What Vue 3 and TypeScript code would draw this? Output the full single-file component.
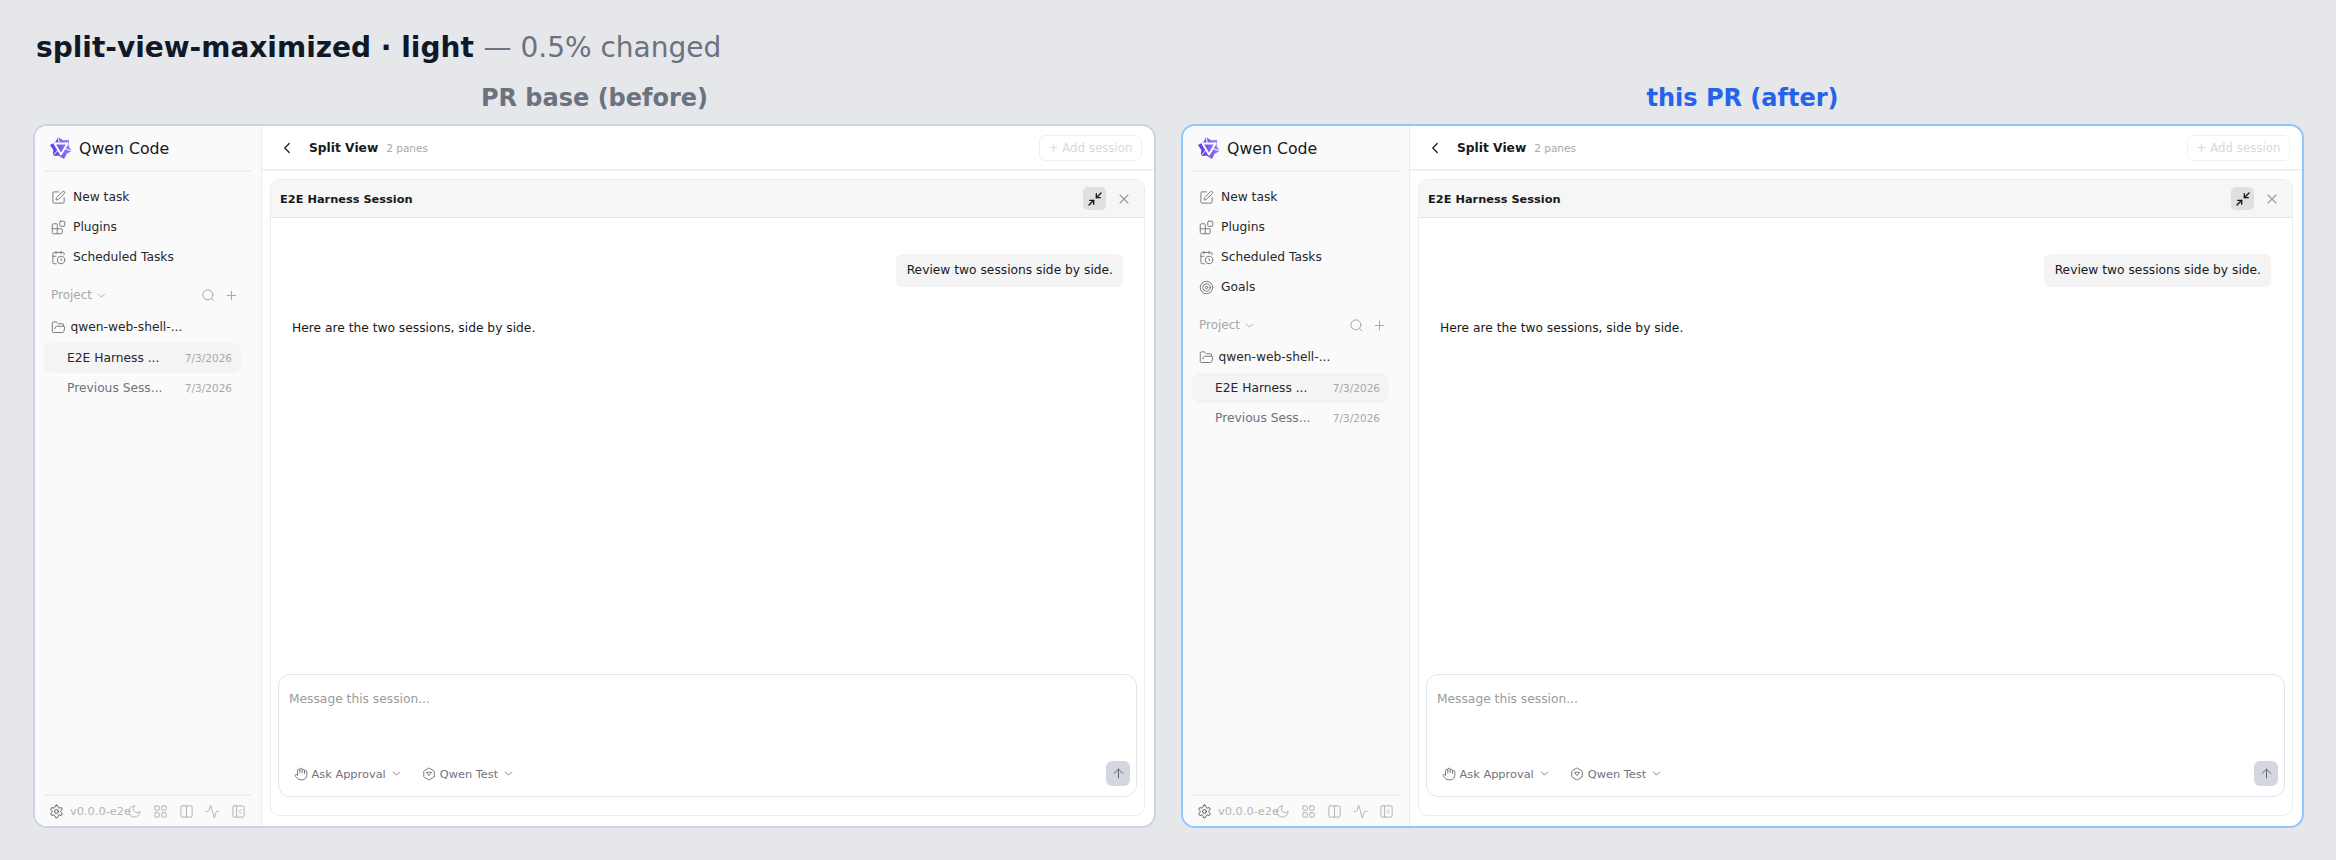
<script setup lang="ts">
interface Pane {
  label: string
  after: boolean
  nav: { icon: string; text: string }[]
}

const icons: Record<string, string> = {
  pen: '<path d="M12 3H5a2 2 0 0 0-2 2v14a2 2 0 0 0 2 2h14a2 2 0 0 0 2-2v-7"/><path d="M18.375 2.625a1 1 0 0 1 3 3l-9.013 9.014a2 2 0 0 1-.853.505l-2.873.84a.5.5 0 0 1-.62-.62l.84-2.873a2 2 0 0 1 .506-.852z"/>',
  blocks: '<path d="M10 22V7a1 1 0 0 0-1-1H4a2 2 0 0 0-2 2v12a2 2 0 0 0 2 2h12a2 2 0 0 0 2-2v-5a1 1 0 0 0-1-1H2"/><rect x="14" y="2" width="8" height="8" rx="1"/>',
  calendar: '<path d="M16 14v2.2l1.6 1"/><path d="M16 2v4"/><path d="M21 7.5V6a2 2 0 0 0-2-2H5a2 2 0 0 0-2 2v14a2 2 0 0 0 2 2h3.5"/><path d="M3 10h5"/><path d="M8 2v4"/><circle cx="16" cy="16" r="6"/>',
  target: '<circle cx="12" cy="12" r="10"/><circle cx="12" cy="12" r="6"/><circle cx="12" cy="12" r="2"/>',
  search: '<path d="m21 21-4.34-4.34"/><circle cx="11" cy="11" r="8"/>',
  plus: '<path d="M5 12h14"/><path d="M12 5v14"/>',
  chevron: '<path d="m6 9 6 6 6-6"/>',
  back: '<path d="m15 18-6-6 6-6"/>',
  folder: '<path d="m6 14 1.5-2.9A2 2 0 0 1 9.24 10H20a2 2 0 0 1 1.94 2.5l-1.54 6a2 2 0 0 1-1.95 1.5H4a2 2 0 0 1-2-2V5a2 2 0 0 1 2-2h3.9a2 2 0 0 1 1.69.9l.81 1.2a2 2 0 0 0 1.67.9H18a2 2 0 0 1 2 2v2"/>',
  gear: '<path d="M12.22 2h-.44a2 2 0 0 0-2 2v.18a2 2 0 0 1-1 1.73l-.43.25a2 2 0 0 1-2 0l-.15-.08a2 2 0 0 0-2.73.73l-.22.38a2 2 0 0 0 .73 2.73l.15.1a2 2 0 0 1 1 1.72v.51a2 2 0 0 1-1 1.74l-.15.09a2 2 0 0 0-.73 2.73l.22.38a2 2 0 0 0 2.73.73l.15-.08a2 2 0 0 1 2 0l.43.25a2 2 0 0 1 1 1.73V20a2 2 0 0 0 2 2h.44a2 2 0 0 0 2-2v-.18a2 2 0 0 1 1-1.73l.43-.25a2 2 0 0 1 2 0l.15.08a2 2 0 0 0 2.73-.73l.22-.39a2 2 0 0 0-.73-2.73l-.15-.08a2 2 0 0 1-1-1.74v-.5a2 2 0 0 1 1-1.74l.15-.09a2 2 0 0 0 .73-2.73l-.22-.38a2 2 0 0 0-2.73-.73l-.15.08a2 2 0 0 1-2 0l-.43-.25a2 2 0 0 1-1-1.73V4a2 2 0 0 0-2-2z"/><circle cx="12" cy="12" r="3"/>',
  moon: '<path d="M12 3a6 6 0 0 0 9 9 9 9 0 1 1-9-9Z"/>',
  grid: '<rect x="3" y="3" width="7" height="7" rx="1"/><rect x="14" y="3" width="7" height="7" rx="1"/><rect x="14" y="14" width="7" height="7" rx="1"/><rect x="3" y="14" width="7" height="7" rx="1"/>',
  columns: '<rect x="3" y="3" width="18" height="18" rx="2"/><path d="M12 3v18"/>',
  activity: '<path d="M22 12h-2.48a2 2 0 0 0-1.93 1.46l-2.35 8.36a.25.25 0 0 1-.48 0L9.24 2.18a.25.25 0 0 0-.48 0l-2.35 8.36A2 2 0 0 1 4.49 12H2"/>',
  panel: '<rect x="3" y="3" width="18" height="18" rx="2"/><path d="M9 3v18"/><path d="m16 15-3-3 3-3"/>',
  minimize: '<path d="m14 10 7-7"/><path d="M20 10h-6V4"/><path d="m3 21 7-7"/><path d="M4 14h6v6"/>',
  close: '<path d="M18 6 6 18"/><path d="m6 6 12 12"/>',
  hand: '<path d="M18 11V6a2 2 0 0 0-2-2a2 2 0 0 0-2 2"/><path d="M14 10V4a2 2 0 0 0-2-2a2 2 0 0 0-2 2v2"/><path d="M10 10.5V6a2 2 0 0 0-2-2a2 2 0 0 0-2 2v8"/><path d="M18 8a2 2 0 1 1 4 0v6a8 8 0 0 1-8 8h-2c-2.8 0-4.5-.86-5.99-2.34l-3.6-3.6a2 2 0 0 1 2.83-2.82L7 15"/>',
  model: '<path d="M21 16V8a2 2 0 0 0-1-1.73l-7-4a2 2 0 0 0-2 0l-7 4A2 2 0 0 0 3 8v8a2 2 0 0 0 1 1.73l7 4a2 2 0 0 0 2 0l7-4A2 2 0 0 0 21 16z"/><path d="m8 9.5 4 5.5 4-5.5z"/>',
  up: '<path d="m5 12 7-7 7 7"/><path d="M12 19V5"/>',
}

const baseNav = [
  { icon: 'pen', text: 'New task' },
  { icon: 'blocks', text: 'Plugins' },
  { icon: 'calendar', text: 'Scheduled Tasks' },
]

const panes: Pane[] = [
  { label: 'PR base (before)', after: false, nav: baseNav },
  { label: 'this PR (after)', after: true, nav: [...baseNav, { icon: 'target', text: 'Goals' }] },
]

const footerIcons = ['moon', 'grid', 'columns', 'activity', 'panel']
</script>

<template>
  <div class="page">
    <h1 class="title">split-view-maximized · light <span class="delta">— 0.5% changed</span></h1>
    <div class="compare">
      <section v-for="pane in panes" :key="pane.label" class="column">
        <h2 class="label" :class="{ 'label-after': pane.after }">{{ pane.label }}</h2>
        <div class="frame" :class="{ 'frame-after': pane.after }">
          <aside class="sidebar">
            <div class="brand">
              <svg class="logo" viewBox="0 0 24 24">
                <defs>
                  <linearGradient :id="`logo-${pane.after}`" x1="0" y1="0.6" x2="1" y2="0.3">
                    <stop offset="0" stop-color="#5534e6" />
                    <stop offset="1" stop-color="#a78bfa" />
                  </linearGradient>
                </defs>
                <path
                  d="M9 1 14.1 4.3 20.1 3.9 19.7 9.9 23 15 17.7 17.7 15 23 9.9 19.7 3.9 20.1 4.3 14.1 1 9 6.3 6.3Z"
                  :fill="`url(#logo-${pane.after})`"
                  stroke-linejoin="round"
                />
                <path d="M5.5 7.5H18.5L12 18.5Z" fill="none" stroke="#fafafa" stroke-width="2" stroke-linejoin="round" />
                <path d="M9 1 10.5 7.5M23 15 15.5 12.5M3.9 20.1 9 14" fill="none" stroke="#fafafa" stroke-width="1" />
              </svg>
              <span>Qwen Code</span>
            </div>
            <nav class="nav">
              <a v-for="item in pane.nav" :key="item.text" class="nav-item">
                <svg class="icon nav-icon" viewBox="0 0 24 24" v-html="icons[item.icon]" />
                {{ item.text }}
              </a>
            </nav>
            <div class="section-head">
              <span class="section-name">Project
                <svg class="icon tiny" viewBox="0 0 24 24" v-html="icons.chevron" />
              </span>
              <span class="section-actions">
                <svg class="icon small" viewBox="0 0 24 24" v-html="icons.search" />
                <svg class="icon small" viewBox="0 0 24 24" v-html="icons.plus" />
              </span>
            </div>
            <div class="folder">
              <svg class="icon nav-icon" viewBox="0 0 24 24" v-html="icons.folder" />
              <span>qwen-web-shell-...</span>
            </div>
            <div class="session session-active">
              <span class="session-name">E2E Harness ...</span>
              <span class="session-date">7/3/2026</span>
            </div>
            <div class="session">
              <span class="session-name session-muted">Previous Sess...</span>
              <span class="session-date">7/3/2026</span>
            </div>
            <footer class="side-footer">
              <svg class="icon gear" viewBox="0 0 24 24" v-html="icons.gear" />
              <span class="version">v0.0.0-e2e</span>
              <span class="footer-icons">
                <svg v-for="name in footerIcons" :key="name" class="icon footer-icon" viewBox="0 0 24 24" v-html="icons[name]" />
              </span>
            </footer>
          </aside>

          <main class="main">
            <header class="topbar">
              <svg class="icon back" viewBox="0 0 24 24" v-html="icons.back" />
              <strong class="topbar-title">Split View</strong>
              <span class="topbar-count">2 panes</span>
              <button class="add-btn">+ Add session</button>
            </header>
            <div class="panel">
              <div class="panel-head">
                <span class="panel-title">E2E Harness Session</span>
                <span class="max-btn">
                  <svg class="icon max-icon" viewBox="0 0 24 24" v-html="icons.minimize" />
                </span>
                <svg class="icon close" viewBox="0 0 24 24" v-html="icons.close" />
              </div>
              <div class="messages">
                <div class="bubble">Review two sessions side by side.</div>
                <p class="reply">Here are the two sessions, side by side.</p>
              </div>
              <div class="composer">
                <div class="placeholder">Message this session...</div>
                <div class="composer-bar">
                  <span class="chip">
                    <svg class="icon chip-icon" viewBox="0 0 24 24" v-html="icons.hand" />
                    Ask Approval
                    <svg class="icon tiny" viewBox="0 0 24 24" v-html="icons.chevron" />
                  </span>
                  <span class="chip">
                    <svg class="icon chip-icon" viewBox="0 0 24 24" v-html="icons.model" />
                    Qwen Test
                    <svg class="icon tiny" viewBox="0 0 24 24" v-html="icons.chevron" />
                  </span>
                  <span class="send">
                    <svg class="icon small" viewBox="0 0 24 24" v-html="icons.up" />
                  </span>
                </div>
              </div>
            </div>
          </main>
        </div>
      </section>
    </div>
  </div>
</template>

<style>
html, body {
  margin: 0;
  background: #e5e7eb;
}
</style>

<style scoped>
* {
  box-sizing: border-box;
}

.page {
  width: 2336px;
  height: 860px;
  padding: 28px 33px 0;
  overflow: hidden;
  font-family: 'DejaVu Sans', sans-serif;
  background: #e5e7eb;
}

.title {
  margin: 0;
  padding-left: 3px;
  font-size: 28px;
  line-height: 40px;
  font-weight: 700;
  color: #111827;
}

.delta {
  font-weight: 400;
  color: #6b7280;
}

.compare {
  display: grid;
  grid-template-columns: 1123px 1123px;
  column-gap: 25px;
  margin-top: 14px;
}

.label {
  margin: 0 0 10px;
  text-align: center;
  font-size: 24px;
  line-height: 32px;
  font-weight: 700;
  color: #6b7280;
}

.label-after {
  color: #2563eb;
}

.frame {
  display: flex;
  height: 704px;
  background: #fff;
  border: 2px solid #cbd5e1;
  border-radius: 14px;
  overflow: hidden;
}

.frame-after {
  border-color: #93c5fd;
}

.icon {
  flex: none;
  fill: none;
  stroke: currentColor;
  stroke-width: 1.6;
  stroke-linecap: round;
  stroke-linejoin: round;
}

.tiny {
  width: 13px;
  height: 13px;
}

.small {
  width: 15px;
  height: 15px;
}

/* sidebar */
.sidebar {
  display: flex;
  flex-direction: column;
  flex: none;
  width: 227px;
  padding: 0 10px 0 9px;
  background: #fafafa;
  border-right: 1px solid #ececec;
}

.brand {
  display: flex;
  align-items: center;
  gap: 6px;
  height: 46px;
  padding-left: 5px;
  font-size: 15.75px;
  color: #18181b;
  border-bottom: 2px solid #f0f0f0;
}

.logo {
  width: 24px;
  height: 24px;
}

.nav {
  display: flex;
  flex-direction: column;
  margin-top: 10px;
}

.nav-item {
  display: flex;
  align-items: center;
  gap: 7px;
  height: 30px;
  padding-left: 7px;
  font-size: 12.25px;
  color: #27272a;
}

.nav-icon {
  width: 15px;
  height: 15px;
  color: #7c7c85;
}

.section-head {
  display: flex;
  align-items: center;
  justify-content: space-between;
  height: 24px;
  margin-top: 11px;
  padding: 0 12.5px 0 7px;
  font-size: 12px;
  color: #a8a8a8;
}

.section-name {
  display: flex;
  align-items: center;
  gap: 3px;
}

.section-actions {
  display: flex;
  gap: 8px;
}

.folder {
  display: flex;
  align-items: center;
  gap: 4.5px;
  height: 30px;
  margin: 5px 0 1px;
  padding-left: 7px;
  font-size: 12.25px;
  color: #27272a;
}

.session {
  display: flex;
  align-items: center;
  justify-content: space-between;
  width: 197px;
  height: 30px;
  padding: 0 9px 0 23px;
  border-radius: 8px;
  font-size: 12.25px;
  color: #27272a;
}

.session-active {
  background: #f4f4f5;
}

.session-muted {
  color: #71717a;
}

.session-date {
  font-size: 10.5px;
  color: #a8a8a8;
}

.side-footer {
  display: flex;
  align-items: center;
  height: 32px;
  margin-top: auto;
  padding-left: 5px;
  border-top: 2px solid #f0f0f0;
  color: #b4b4b4;
}

.gear {
  width: 15px;
  height: 15px;
  color: #52525b;
}

.version {
  margin-left: 6px;
  width: 56.5px;
  font-size: 11.375px;
  white-space: nowrap;
}

.footer-icons {
  display: flex;
  gap: 11px;
}

.footer-icon {
  width: 15px;
  height: 15px;
}

/* main */
.main {
  display: flex;
  flex-direction: column;
  flex: 1;
  min-width: 0;
}

.topbar {
  display: flex;
  align-items: center;
  flex: none;
  height: 45px;
  padding: 0 12px 0 16px;
  border-bottom: 2px solid #f0f0f0;
}

.back {
  width: 18px;
  height: 18px;
  color: #18181b;
}

.topbar-title {
  margin-left: 13px;
  font-size: 12.25px;
  color: #18181b;
}

.topbar-count {
  margin-left: 8px;
  font-size: 10.5px;
  color: #a8a8a8;
}

.add-btn {
  margin-left: auto;
  width: 103px;
  height: 26px;
  padding: 0;
  font: inherit;
  font-size: 11.8px;
  color: #d9d9d9;
  background: #fff;
  border: 1px solid #f0f0f0;
  border-radius: 6px;
}

.panel {
  display: flex;
  flex-direction: column;
  flex: 1;
  margin: 8px 9px 10px 8px;
  border: 1px solid #ececec;
  border-radius: 10px;
  overflow: hidden;
}

.panel-head {
  display: flex;
  align-items: center;
  flex: none;
  height: 38px;
  padding: 0 12px 0 9px;
  background: #f6f6f6;
  border-bottom: 1px solid #e4e4e4;
}

.panel-title {
  font-size: 11.375px;
  font-weight: 700;
  color: #18181b;
}

.max-btn {
  display: flex;
  align-items: center;
  justify-content: center;
  width: 23px;
  height: 23px;
  margin-left: auto;
  color: #18181b;
  background: #e0e0e0;
  border-radius: 5px;
}

.max-icon {
  width: 16px;
  height: 16px;
  stroke-width: 2;
}

.close {
  width: 16px;
  height: 16px;
  margin-left: 10px;
  color: #9a9a9a;
}

.messages {
  flex: 1;
  padding: 36px 21px 0;
}

.bubble {
  width: fit-content;
  margin-left: auto;
  padding: 10px 10px 10px 11px;
  font-size: 12.25px;
  line-height: 13px;
  color: #18181b;
  background: #f4f4f5;
  border-radius: 6px;
}

.reply {
  margin: 32px 0 0;
  font-size: 12.25px;
  line-height: 18px;
  color: #18181b;
}

.composer {
  display: flex;
  flex-direction: column;
  flex: none;
  height: 123px;
  margin: 0 7px 18px;
  border: 1.5px solid #e4e4ec;
  border-radius: 12px;
}

.placeholder {
  margin: 17px 0 0 10px;
  font-size: 12.25px;
  color: #9a9a9a;
}

.composer-bar {
  display: flex;
  align-items: center;
  gap: 19px;
  margin-top: auto;
  padding: 0 6px 10px 14.5px;
}

.chip {
  display: flex;
  align-items: center;
  gap: 4px;
  font-size: 11.375px;
  color: #71717f;
}

.chip-icon {
  width: 14px;
  height: 14px;
}

.send {
  display: flex;
  align-items: center;
  justify-content: center;
  width: 24px;
  height: 25px;
  margin-left: auto;
  color: #666;
  background: #d4d6e0;
  border-radius: 6px;
}
</style>
